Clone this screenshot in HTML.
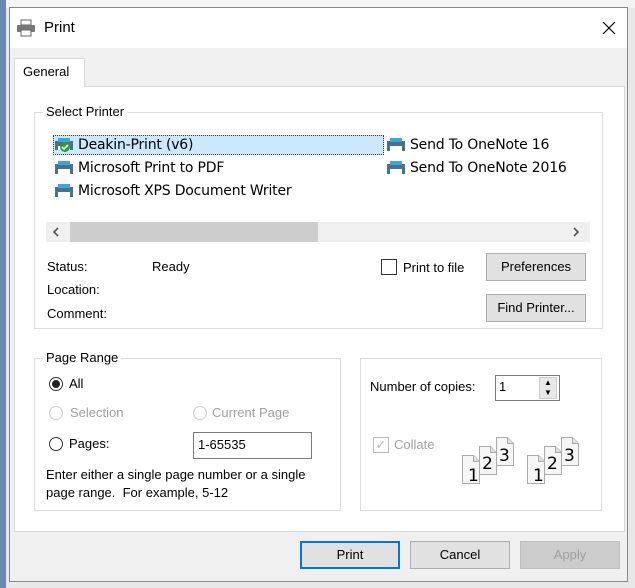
<!DOCTYPE html>
<html><head><style>
*{box-sizing:border-box;margin:0;padding:0}
body{width:635px;height:588px;position:relative;overflow:hidden;background:#e8e8e8;font-family:"Liberation Sans",sans-serif;font-size:13px;color:#000}
.a{position:absolute}
.t{position:absolute;white-space:nowrap;line-height:16px}
.grp{position:absolute;border:1px solid #dcdcdc}
.lbl{position:absolute;background:#fff;padding:0 3px;top:-9px;left:8px;line-height:16px}
.btn{position:absolute;background:#e1e1e1;border:1px solid #adadad;text-align:center;line-height:26px}
.rad{position:absolute;width:14px;height:14px;border:1px solid #333;border-radius:50%;background:#fff}
.dis{color:#a0a0a0}
.pi{position:absolute;width:20px;height:14px}
.pn{font-family:"DejaVu Sans",sans-serif;font-size:14px;letter-spacing:-0.2px}
</style></head><body>
<div class="a" style="left:0;top:0;width:635px;height:8px;background:#f4f4f4"></div>
<div class="a" style="left:0;top:0;width:6px;height:588px;background:#6b88b0"></div>
<div class="a" style="left:9px;top:7px;width:619px;height:575px;background:#f0f0f0;border:1px solid #888"></div>
<div class="a" style="left:10px;top:8px;width:617px;height:40px;background:#fff"></div>
<svg class="a" style="left:16px;top:19px" width="20" height="18" viewBox="0 0 20 18"><rect x="5" y="1" width="10" height="5" fill="#fff" stroke="#666"/><rect x="1" y="6" width="18" height="7" rx="1" fill="#777"/><rect x="5" y="11" width="10" height="6" fill="#fff" stroke="#666"/></svg>
<div class="t" style="left:44px;top:20px;font-size:15px">Print</div>
<svg class="a" style="left:602px;top:21px" width="14" height="14" viewBox="0 0 14 14"><path d="M1 1L13 13M13 1L1 13" stroke="#000" stroke-width="1.2"/></svg>
<div class="a" style="left:14px;top:86px;width:611px;height:446px;background:#fff;border:1px solid #d9d9d9"></div>
<div class="a" style="left:14px;top:58px;width:71px;height:29px;background:#fff;border:1px solid #d9d9d9;border-bottom:none"></div>
<div class="t" style="left:23px;top:64px">General</div>

<div class="grp" style="left:34px;top:112px;width:569px;height:217px"><span class="lbl">Select Printer</span></div>
<div class="a" style="left:53px;top:135px;width:331px;height:20px;background:#cce8ff;border:1px dotted #333"></div>
<svg class="pi" style="left:54px;top:138px" viewBox="0 0 20 14"><rect x="1" y="3" width="18" height="9" fill="#4a6f8f"/><rect x="4" y="0" width="12" height="4" fill="#39a8d8"/><rect x="4" y="8" width="12" height="4" fill="#fff"/><circle cx="11" cy="9" r="5" fill="#2a9a3a"/><path d="M8 9l2 2 4-4" stroke="#fff" stroke-width="1.6" fill="none"/></svg>
<div class="t pn" style="left:78px;top:137px">Deakin-Print (v6)</div>
<svg class="pi" style="left:54px;top:161px" viewBox="0 0 20 14"><rect x="1" y="3" width="18" height="10" fill="#4a6f8f"/><rect x="4" y="0" width="12" height="4" fill="#39a8d8"/><rect x="4" y="8" width="12" height="5" fill="#fff"/></svg>
<div class="t pn" style="left:78px;top:160px">Microsoft Print to PDF</div>
<svg class="pi" style="left:54px;top:184px" viewBox="0 0 20 14"><rect x="1" y="3" width="18" height="10" fill="#4a6f8f"/><rect x="4" y="0" width="12" height="4" fill="#39a8d8"/><rect x="4" y="8" width="12" height="5" fill="#fff"/></svg>
<div class="t pn" style="left:78px;top:183px">Microsoft XPS Document Writer</div>
<svg class="pi" style="left:386px;top:138px" viewBox="0 0 20 14"><rect x="1" y="3" width="18" height="10" fill="#4a6f8f"/><rect x="4" y="0" width="12" height="4" fill="#39a8d8"/><rect x="4" y="8" width="12" height="5" fill="#fff"/></svg>
<div class="t pn" style="left:410px;top:137px">Send To OneNote 16</div>
<svg class="pi" style="left:386px;top:161px" viewBox="0 0 20 14"><rect x="1" y="3" width="18" height="10" fill="#4a6f8f"/><rect x="4" y="0" width="12" height="4" fill="#39a8d8"/><rect x="4" y="8" width="12" height="5" fill="#fff"/></svg>
<div class="t pn" style="left:410px;top:160px">Send To OneNote 2016</div>
<div class="a" style="left:46px;top:222px;width:544px;height:20px;background:#f0f0f0"></div>
<div class="a" style="left:70px;top:222px;width:248px;height:20px;background:#cdcdcd"></div>
<svg class="a" style="left:52px;top:227px" width="8" height="10"><path d="M6 1L2 5l4 4" stroke="#555" stroke-width="1.6" fill="none"/></svg>
<svg class="a" style="left:572px;top:227px" width="8" height="10"><path d="M2 1l4 4-4 4" stroke="#555" stroke-width="1.6" fill="none"/></svg>
<div class="t" style="left:47px;top:259px">Status:</div>
<div class="t" style="left:152px;top:259px">Ready</div>
<div class="t" style="left:47px;top:282px">Location:</div>
<div class="t" style="left:47px;top:306px">Comment:</div>
<div class="a" style="left:381px;top:259px;width:16px;height:16px;border:1px solid #333;background:#fff"></div>
<div class="t" style="left:403px;top:260px">Print to file</div>
<div class="btn" style="left:486px;top:253px;width:100px;height:28px">Preferences</div>
<div class="btn" style="left:486px;top:294px;width:100px;height:28px">Find Printer...</div>

<div class="grp" style="left:34px;top:358px;width:307px;height:153px"><span class="lbl">Page Range</span></div>
<div class="rad" style="left:49px;top:377px"></div><div class="a" style="left:52px;top:380px;width:8px;height:8px;border-radius:50%;background:#222"></div>
<div class="t" style="left:69px;top:376px">All</div>
<div class="rad" style="left:49px;top:406px;border-color:#ccc"></div>
<div class="t dis" style="left:70px;top:405px">Selection</div>
<div class="rad" style="left:193px;top:406px;border-color:#ccc"></div>
<div class="t dis" style="left:212px;top:405px">Current Page</div>
<div class="rad" style="left:49px;top:437px"></div>
<div class="t" style="left:69px;top:436px">Pages:</div>
<div class="a" style="left:193px;top:432px;width:119px;height:27px;border:1px solid #7a7a7a;background:#fff"></div>
<div class="t" style="left:198px;top:437px">1-65535</div>
<div class="t" style="left:46px;top:467px">Enter either a single page number or a single</div>
<div class="t" style="left:46px;top:485px">page range.&nbsp; For example, 5-12</div>

<div class="grp" style="left:360px;top:358px;width:242px;height:153px"></div>
<div class="t" style="left:370px;top:379px">Number of copies:</div>
<div class="a" style="left:495px;top:375px;width:65px;height:26px;border:1px solid #7a7a7a;background:#fff"></div>
<div class="t" style="left:499px;top:379px">1</div>
<div class="a" style="left:539px;top:377px;width:18px;height:22px;background:#e8e8e8;border:1px solid #ccc;font-size:8px;line-height:10px;text-align:center">▲<br>▼</div>
<div class="a" style="left:373px;top:437px;width:16px;height:16px;border:1px solid #bbb;background:#fff;color:#bbb;font-size:13px;line-height:14px;text-align:center">✓</div>
<div class="t dis" style="left:394px;top:437px">Collate</div>
<svg class="a" style="left:458px;top:434px" width="132" height="54" viewBox="0 0 132 54">
<defs><g id="p"><path d="M0.5 0.5h11l6 6v22h-17z" fill="#f6f6f6" stroke="#aaa"/><path d="M11.5 0.5v6h6" fill="#e0e0e0" stroke="#aaa"/></g></defs>
<g font-family="DejaVu Sans,sans-serif" font-size="17">
<use href="#p" x="38" y="3"/><text x="41" y="27">3</text>
<use href="#p" x="21" y="12"/><text x="24" y="35">2</text>
<use href="#p" x="4" y="21"/><text x="10" y="47">1</text>
<use href="#p" x="103" y="3"/><text x="106" y="27">3</text>
<use href="#p" x="86" y="12"/><text x="89" y="35">2</text>
<use href="#p" x="69" y="21"/><text x="75" y="47">1</text>
</g></svg>

<div class="btn" style="left:300px;top:541px;width:100px;height:28px;border:2px solid #0078d7;line-height:24px">Print</div>
<div class="btn" style="left:410px;top:541px;width:100px;height:28px">Cancel</div>
<div class="btn" style="left:520px;top:541px;width:100px;height:28px;background:#ccc;border-color:#bfbfbf;color:#a0a0a0">Apply</div>
</body></html>
